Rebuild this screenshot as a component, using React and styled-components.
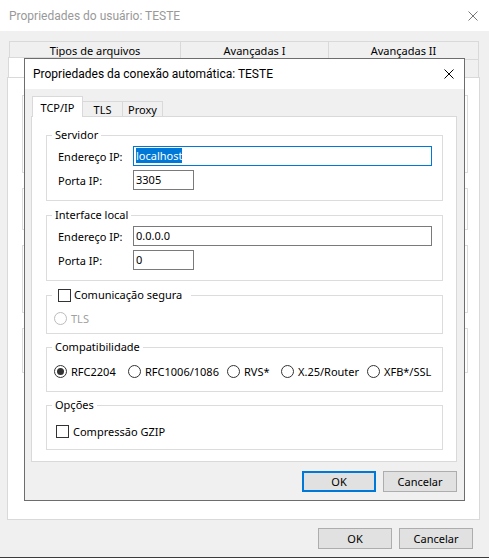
import React from "react";
import styled, { createGlobalStyle } from "styled-components";

const GlobalStyle = createGlobalStyle`
  * { box-sizing: border-box; }
  html, body { margin: 0; padding: 0; background: #2b2b2b; }
  body {
    font-family: "Noto Sans", "Liberation Sans", sans-serif;
    font-size: 11px;
    color: #000;
  }
`;

const Desktop = styled.div`
  position: relative;
  width: 489px;
  height: 558px;
  overflow: hidden;
`;

const Window = styled.div`
  width: 489px;
  height: 558px;
  display: flex;
  flex-direction: column;
  background: #f0f0f0;
  border-bottom: 1px solid #3c3c3c;
`;

const TitleBar = styled.div`
  height: ${p => p.$height}px;
  flex: none;
  display: flex;
  align-items: center;
  justify-content: space-between;
  padding: 0 ${p => p.$right}px 0 ${p => p.$left}px;
  background: #fff;
  font-family: Roboto, "Noto Sans", sans-serif;
  font-size: 12px;
  color: ${p => (p.$inactive ? "#999" : "#000")};
`;

const CloseGlyph = ({ color }) => (
  <svg width="10" height="10" viewBox="0 0 10 10">
    <path d="M0.5 0.5L9.5 9.5M9.5 0.5L0.5 9.5" stroke={color} strokeWidth="1" />
  </svg>
);

const OuterBody = styled.div`
  flex: 1;
  display: flex;
  flex-direction: column;
  padding: 9px 9px 0 7px;
`;

const BackTabRow = styled.div`
  display: flex;
  height: ${p => p.$height}px;
  padding-left: ${p => p.$indent}px;
  align-items: flex-end;
`;

const BackTab = styled.div`
  width: ${p => p.$w}px;
  height: ${p => (p.$selected ? p.$h + 2 : p.$h)}px;
  margin-left: -1px;
  &:first-child { margin-left: 0; }
  display: flex;
  align-items: center;
  justify-content: center;
  border: 1px solid #d9d9d9;
  border-bottom: none;
  background: ${p => (p.$selected ? "#fff" : "#f0f0f0")};
  position: relative;
  z-index: ${p => (p.$selected ? 1 : 0)};
`;

const BackPanel = styled.div`
  height: 443px;
  background: #fff;
  border: 1px solid #d9d9d9;
  padding: 17px 11px 0 14px;
  display: flex;
  flex-direction: column;
  gap: 15px;
`;

const BackGroup = styled.div`
  height: ${p => p.$h}px;
  border: 1px solid #dcdcdc;
`;

const Footer = styled.div`
  display: flex;
  justify-content: flex-end;
  gap: 7px;
  padding: ${p => p.$top}px ${p => p.$right}px 0 0;
`;

const Button = styled.button`
  width: 74px;
  height: 21px;
  padding: 0;
  font: inherit;
  color: #000;
  background: #e1e1e1;
  border: ${p => (p.$default ? "2px solid #0078d7" : "1px solid #adadad")};
`;

const Dialog = styled.div`
  position: absolute;
  z-index: 10;
  left: 24px;
  top: 58px;
  width: 441px;
  height: 443px;
  display: flex;
  flex-direction: column;
  background: #f0f0f0;
  border: 1px solid #6d6d6d;
`;

const DialogBody = styled.div`
  flex: 1;
  padding: 7px 7px 0 6px;
  display: flex;
  flex-direction: column;
`;

const TabStrip = styled.div`
  height: 21px;
  display: flex;
  align-items: flex-end;
  padding-left: 1px;
  margin-bottom: -1px;
  position: relative;
  z-index: 1;
`;

const Tab = styled.div`
  width: ${p => p.$w}px;
  height: ${p => (p.$active ? 21 : 16)}px;
  margin-left: -1px;
  &:first-child { margin-left: 0; }
  display: flex;
  align-items: center;
  justify-content: center;
  padding-top: ${p => (p.$active ? 0 : 1)}px;
  background: ${p => (p.$active ? "#fff" : "#f0f0f0")};
  border: 1px solid #d9d9d9;
  border-bottom: ${p => (p.$active ? "none" : "1px solid #d9d9d9")};
`;

const Panel = styled.div`
  height: 346px;
  background: #fff;
  border: 1px solid #d9d9d9;
  padding-top: 11px;
  display: flex;
  flex-direction: column;
`;

const Group = styled.fieldset`
  margin: ${p => p.$gap}px 13px 0 14px;
  border: 1px solid #dcdcdc;
  padding: ${p => p.$pad};
  min-width: 0;
`;

const Caption = styled.legend`
  margin-left: -2px;
  padding: 0 ${p => p.$padRight || 3}px 0 ${p => p.$padLeft || 3}px;
  line-height: 14px;
  display: flex;
  align-items: center;
  gap: 3px;
`;

const FieldGrid = styled.div`
  display: grid;
  grid-template-columns: 75px auto;
  row-gap: 4px;
  align-items: center;
  margin-left: 4px;
`;

const TextBox = styled.div`
  width: ${p => p.$w}px;
  height: 20px;
  border: 1px solid ${p => (p.$focused ? "#0078d7" : "#7a7a7a")};
  padding: 2px 2px 0;
  line-height: 14px;
  white-space: nowrap;
`;

const Selection = styled.span`
  background: #0078d7;
  color: #fff;
`;

const OptionRow = styled.div`
  display: grid;
  grid-template-columns: 74px 99px 54px 86px auto;
  align-items: center;
`;

const Option = styled.label`
  display: flex;
  align-items: center;
  gap: 4px;
  height: 14px;
  margin-left: ${p => p.$indent || 0}px;
  color: ${p => (p.$disabled ? "#a0a0a0" : "#000")};
`;

const RadioDot = styled.span`
  width: 13px;
  height: 13px;
  flex: none;
  border-radius: 50%;
  background: #fff;
  border: 1px solid ${p => (p.$disabled ? "#bcbcbc" : "#333")};
  display: flex;
  align-items: center;
  justify-content: center;
  &::after {
    content: "";
    width: 7px;
    height: 7px;
    border-radius: 50%;
    background: ${p => (p.$checked ? "#333" : "transparent")};
  }
`;

const CheckBox = styled.span`
  width: 13px;
  height: 13px;
  flex: none;
  background: #fff;
  border: 1px solid #333;
`;

const Radio = ({ label, checked, disabled }) => (
  <Option $disabled={disabled}>
    <RadioDot $checked={checked} $disabled={disabled} />
    {label}
  </Option>
);

const compat = ["RFC2204", "RFC1006/1086", "RVS*", "X.25/Router", "XFB*/SSL"];

export default function App() {
  return (
    <Desktop>
      <GlobalStyle />
      <Window>
        <TitleBar $height={31} $left={9} $right={11} $inactive>
          <span>Propriedades do usuário: TESTE</span>
          <CloseGlyph color="#777" />
        </TitleBar>
        <OuterBody>
          <BackTabRow $height={19} $indent={2}>
            <BackTab $w={172} $h={18}>Tipos de arquivos</BackTab>
            <BackTab $w={149} $h={18}>Avançadas I</BackTab>
            <BackTab $w={151} $h={18}>Avançadas II</BackTab>
          </BackTabRow>
          <BackTabRow $height={18} $indent={1}>
            <BackTab $w={81} $h={18} $selected />
            <BackTab $w={148} $h={18} />
            <BackTab $w={146} $h={18} />
            <BackTab $w={99} $h={18} />
          </BackTabRow>
          <BackPanel>
            <BackGroup $h={78} />
            <BackGroup $h={42} />
            <BackGroup $h={68} />
            <BackGroup $h={45} />
          </BackPanel>
          <Footer $top={8} $right={7}>
            <Button>OK</Button>
            <Button>Cancelar</Button>
          </Footer>
        </OuterBody>
      </Window>

      <Dialog>
        <TitleBar $height={30} $left={8} $right={10}>
          <span>Propriedades da conexão automática: TESTE</span>
          <CloseGlyph color="#000" />
        </TitleBar>
        <DialogBody>
          <TabStrip>
            <Tab $w={51} $active>TCP/IP</Tab>
            <Tab $w={41}>TLS</Tab>
            <Tab $w={41}>Proxy</Tab>
          </TabStrip>
          <Panel>
            <Group $gap={0} $pad="4px 10px 10px 7px">
              <Caption>Servidor</Caption>
              <FieldGrid>
                <span>Endereço IP:</span>
                <TextBox $w={299} $focused>
                  <Selection>localhost</Selection>
                </TextBox>
                <span>Porta IP:</span>
                <TextBox $w={61}>3305</TextBox>
              </FieldGrid>
            </Group>

            <Group $gap={7} $pad="4px 10px 10px 7px">
              <Caption>Interface local</Caption>
              <FieldGrid>
                <span>Endereço IP:</span>
                <TextBox $w={299}>0.0.0.0</TextBox>
                <span>Porta IP:</span>
                <TextBox $w={61}>0</TextBox>
              </FieldGrid>
            </Group>

            <Group $gap={7} $pad="9px 10px 8px 7px">
              <Caption $padLeft={6} $padRight={9}>
                <CheckBox />
                Comunicação segura
              </Caption>
              <Radio label="TLS" disabled />
            </Group>

            <Group $gap={6} $pad="10px 10px 13px 7px">
              <Caption>Compatibilidade</Caption>
              <OptionRow>
                {compat.map((c, i) => (
                  <Radio key={c} label={c} checked={i === 0} />
                ))}
              </OptionRow>
            </Group>

            <Group $gap={6} $pad="12px 10px 11px 7px">
              <Caption>Opções</Caption>
              <Option $indent={2}>
                <CheckBox />
                Compressão GZIP
              </Option>
            </Group>
          </Panel>
          <Footer $top={9} $right={0}>
            <Button $default>OK</Button>
            <Button>Cancelar</Button>
          </Footer>
        </DialogBody>
      </Dialog>
    </Desktop>
  );
}
